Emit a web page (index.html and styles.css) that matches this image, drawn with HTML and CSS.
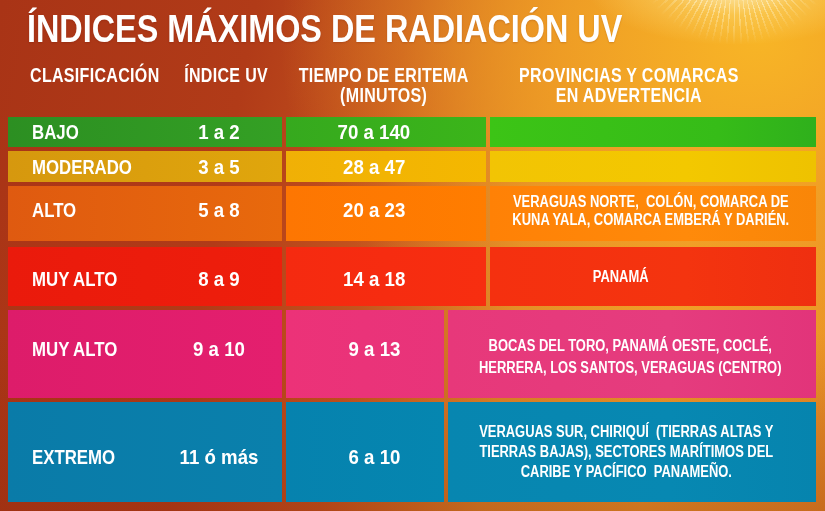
FILE: index.html
```html
<!DOCTYPE html>
<html lang="es">
<head>
<meta charset="utf-8">
<title>Índices máximos de radiación UV</title>
<link rel="stylesheet" href="styles.css">
</head>
<body>
<div class="page">
  <h1 class="title"><span class="sq">ÍNDICES MÁXIMOS DE RADIACIÓN UV</span></h1>
  <div class="heads">
    <div class="h h-clas"><span class="sq">CLASIFICACIÓN</span></div>
    <div class="h h-ind"><span class="sq">ÍNDICE UV</span></div>
    <div class="h h-tiempo"><span class="sq">TIEMPO DE ERITEMA<br>(MINUTOS)</span></div>
    <div class="h h-prov"><span class="sq">PROVINCIAS Y COMARCAS<br>EN ADVERTENCIA</span></div>
  </div>
  <div class="table">
    <div class="row r1">
      <div class="c1"><span class="lbl">BAJO</span><span class="num">1 a 2</span></div>
      <div class="c2"><span class="t">70 a 140</span></div>
      <div class="c3"></div>
    </div>
    <div class="row r2">
      <div class="c1"><span class="lbl">MODERADO</span><span class="num">3 a 5</span></div>
      <div class="c2"><span class="t">28 a 47</span></div>
      <div class="c3"></div>
    </div>
    <div class="row r3">
      <div class="c1"><span class="lbl">ALTO</span><span class="num">5 a 8</span></div>
      <div class="c2"><span class="t">20 a 23</span></div>
      <div class="c3"><p>VERAGUAS NORTE,&nbsp; COLÓN, COMARCA DE<br>KUNA YALA, COMARCA EMBERÁ Y DARIÉN.</p></div>
    </div>
    <div class="row r4">
      <div class="c1"><span class="lbl">MUY ALTO</span><span class="num">8 a 9</span></div>
      <div class="c2"><span class="t">14 a 18</span></div>
      <div class="c3"><p>PANAMÁ</p></div>
    </div>
    <div class="row wide r5">
      <div class="c1"><span class="lbl">MUY ALTO</span><span class="num">9 a 10</span></div>
      <div class="c2"><span class="t">9 a 13</span></div>
      <div class="c3"><p>BOCAS DEL TORO, PANAMÁ OESTE, COCLÉ,<br>HERRERA, LOS SANTOS, VERAGUAS (CENTRO)</p></div>
    </div>
    <div class="row wide r6">
      <div class="c1"><span class="lbl">EXTREMO</span><span class="num">11 ó más</span></div>
      <div class="c2"><span class="t">6 a 10</span></div>
      <div class="c3"><p>VERAGUAS SUR, CHIRIQUÍ&nbsp; (TIERRAS ALTAS Y<br>TIERRAS BAJAS), SECTORES MARÍTIMOS DEL<br>CARIBE Y PACÍFICO&nbsp; PANAMEÑO.</p></div>
    </div>
  </div>
</div>
</body>
</html>
```

FILE: styles.css
```css
html, body {
  margin: 0;
  padding: 0;
}

body {
  width: 825px;
  height: 511px;
  overflow: hidden;
  font-family: "Liberation Sans", Arial, sans-serif;
  font-weight: 700;
  color: #ffffff;
}

.page {
  position: relative;
  box-sizing: border-box;
  width: 825px;
  height: 511px;
  padding: 9px 9px 0 8px;
  background:
    radial-gradient(ellipse 150px 60px at 735px -15px, rgba(255, 250, 215, 0.85) 0%, rgba(255, 226, 130, 0.4) 50%, rgba(255, 200, 60, 0) 100%),
    radial-gradient(ellipse 480px 380px at 760px 40px, rgba(248, 182, 38, 0.95) 0%, rgba(242, 160, 36, 0.75) 45%, rgba(230, 130, 40, 0) 100%),
    linear-gradient(180deg, rgba(0, 0, 0, 0) 65%, rgba(140, 40, 10, 0.35) 100%),
    linear-gradient(100deg, #a93416 0%, #b13b18 28%, #c4541e 45%, #e08a28 62%, #ef9d2a 80%, #e89028 100%);
  overflow: hidden;
}

/* sun rays peeking in at the top edge */
.page::before {
  content: "";
  position: absolute;
  left: 555px;
  top: -230px;
  width: 360px;
  height: 340px;
  background: repeating-conic-gradient(from 0deg at 50% 50%, rgba(255, 255, 235, 0.5) 0deg 1deg, rgba(255, 255, 235, 0) 1deg 4deg);
  -webkit-mask-image: radial-gradient(circle at 50% 50%, rgba(0,0,0,0) 45px, rgba(0,0,0,0.85) 70px, rgba(0,0,0,0) 105px);
  mask-image: radial-gradient(circle at 50% 50%, rgba(0,0,0,0) 45px, rgba(0,0,0,0.85) 70px, rgba(0,0,0,0) 105px);
  pointer-events: none;
}

.title, .heads, .table {
  position: relative;
}

/* horizontally condensed text (no condensed face installed) */
.sq {
  display: inline-block;
  transform: scaleX(0.82);
  transform-origin: 50% 50%;
}

.title {
  margin: 0;
  padding-left: 19px;
  font-size: 39px;
  line-height: 40px;
  font-weight: 700;
  white-space: nowrap;
  text-shadow: 0 1px 2px rgba(90, 20, 0, 0.2);
}

.title .sq {
  transform: scaleX(0.83);
  transform-origin: 0 50%;
}

.heads {
  display: grid;
  grid-template-columns: 140px 113px 202px 287px;
  margin: 16px 0 0 22px;
  font-size: 19.5px;
  line-height: 20px;
  letter-spacing: 0.4px;
  white-space: nowrap;
}

.h {
  display: flex;
  justify-content: center;
  text-align: center;
}

.h-clas {
  justify-content: flex-start;
  text-align: left;
}

.h-clas .sq {
  transform-origin: 0 50%;
}

.table {
  display: flex;
  flex-direction: column;
  gap: 4px;
  margin-top: 12px;
  width: 808px;
}

.row {
  display: grid;
  grid-template-columns: 274px 200px 326px;
  gap: 4px;
  font-size: 20.5px;
  line-height: 24px;
}

.row.wide {
  grid-template-columns: 274px 158px 368px;
}

.c1, .c2, .c3 {
  display: flex;
  align-items: center;
  box-sizing: border-box;
  white-space: nowrap;
}

.c1 {
  padding-left: 24px;
}

.lbl {
  width: 140px;
  transform: scaleX(0.82);
  transform-origin: 0 50%;
}

.num {
  width: 94px;
  text-align: center;
  transform: scaleX(0.91);
  transform-origin: 50% 50%;
}

.c2 {
  justify-content: center;
  padding-right: 24px;
}

.c2 .t {
  transform: scaleX(0.91);
  transform-origin: 50% 50%;
}

.wide .c2 {
  padding-right: 0;
  padding-left: 18px;
}

.c3 {
  justify-content: center;
  padding-right: 4px;
  font-size: 15.6px;
  line-height: 20px;
  text-align: center;
}

.c3 p {
  margin: 0;
  flex: none;
  transform: scaleX(0.83);
  transform-origin: 50% 50%;
}

/* row sizes */
.r1 { height: 30px; }
.r2 { height: 31px; }
.r3 { height: 55px; margin-bottom: 2px; }
.r4 { height: 59px; }
.r5 { height: 88px; }
.r6 { height: 100px; }

.r3 .c1, .r3 .c2 { padding-bottom: 8px; }
.r4 .c1, .r4 .c2 { padding-top: 4px; }
.r5 .c1, .r5 .c2 { padding-bottom: 10px; }
.r6 .c1, .r6 .c2 { padding-top: 9px; }

.r3 .c3 { line-height: 18px; padding-bottom: 6px; }
.r4 .c3 { padding-right: 64px; }
.r5 .c3 { line-height: 21.5px; padding-top: 5px; }
.r6 .c3 { padding-right: 12px; }

/* colours */
.r1 .c1 { background: linear-gradient(90deg, #2c8f22, #34a024); }
.r1 .c2 { background: linear-gradient(90deg, #36a91e, #3bb51a); }
.r1 .c3 { background: linear-gradient(90deg, #3cc416, #36bc18 70%, #2fb01c); }

.r2 .c1 { background: linear-gradient(90deg, #d6980e, #e0a60c); }
.r2 .c2 { background: linear-gradient(90deg, #f0b006, #f4b800); }
.r2 .c3 { background: linear-gradient(90deg, #f2c404, #f3c800 60%, #eec200); }

.r3 .c1 { background: linear-gradient(90deg, #df5a10, #e8690c); }
.r3 .c2 { background: linear-gradient(90deg, #fd7602, #ff7d00); }
.r3 .c3 { background: linear-gradient(90deg, #ff8106, #ff8a0a 60%, #f98608); }

.r4 .c1 { background: linear-gradient(90deg, #ea1a0c, #ee1e0c); }
.r4 .c2 { background: linear-gradient(90deg, #f52a10, #f72e10); }
.r4 .c3 { background: linear-gradient(90deg, #f5300f, #f4340f 60%, #ef2f10); }

.r5 .c1 { background: linear-gradient(90deg, #dd1c6a, #e41f6e); }
.r5 .c2 { background: linear-gradient(90deg, #ec3278, #e8347a); }
.r5 .c3 { background: linear-gradient(90deg, #e7387a, #e53c7e 60%, #e2347a); }

.r6 .c1 { background: linear-gradient(90deg, #0a7ba8, #0a80ac); }
.r6 .c2 { background: linear-gradient(90deg, #0682ae, #0586b0); }
.r6 .c3 { background: linear-gradient(90deg, #0786b0, #0788b2 60%, #0684ae); }
```
